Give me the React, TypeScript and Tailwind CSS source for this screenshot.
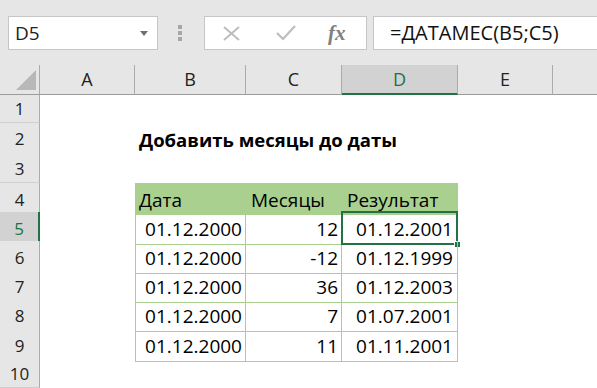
import React from "react";

const rows = [
  ["01.12.2000", "12", "01.12.2001"],
  ["01.12.2000", "-12", "01.12.1999"],
  ["01.12.2000", "36", "01.12.2003"],
  ["01.12.2000", "7", "01.07.2001"],
  ["01.12.2000", "11", "01.11.2001"],
];

const heights = [
  "h-[29px]",
  "h-[30px]",
  "h-[30px]",
  "h-[29px]",
  "h-[29px]",
  "h-[29px]",
  "h-[29px]",
  "h-[30px]",
  "h-[29px]",
  "h-[30px]",
];

const cols = ["A", "B", "C", "D", "E", ""];

function Toolbar() {
  return (
    <div className="h-[65px] bg-[#e6e6e6] flex items-start pt-[16px]">
      {/* name box */}
      <div className="ml-[8px] w-[150px] h-[34px] bg-white border border-[#c6c6c6] flex items-center justify-between pl-[6px] pr-[9px]">
        <span className="text-[19px] text-[#222] leading-none">D5</span>
        <svg width="8" height="5" viewBox="0 0 8 5">
          <path d="M0 0 L8 0 L4 5 Z" fill="#707070" />
        </svg>
      </div>
      {/* grip dots */}
      <div className="ml-[20px] mt-[9px] flex flex-col gap-[2px]">
        <div className="w-[4px] h-[4px] bg-[#a6a6a6]" />
        <div className="w-[4px] h-[4px] bg-[#a6a6a6]" />
        <div className="w-[4px] h-[4px] bg-[#a6a6a6]" />
      </div>
      {/* cancel / enter / fx */}
      <div className="ml-[22px] w-[163px] h-[34px] bg-white border border-[#c6c6c6] flex items-center">
        <svg className="ml-[18px]" width="17" height="15" viewBox="0 0 17 15">
          <path d="M1 1 L16 14 M16 1 L1 14" stroke="#bdbdbd" strokeWidth="2" fill="none" />
        </svg>
        <svg className="ml-[36px]" width="20" height="16" viewBox="0 0 20 16">
          <path d="M1 8 L7 14 L19 1" stroke="#bdbdbd" strokeWidth="2.2" fill="none" />
        </svg>
        <span className="ml-[32px] font-['Liberation_Serif',serif] italic font-bold text-[21px] text-[#808080] leading-none">
          fx
        </span>
      </div>
      {/* formula */}
      <div className="ml-[6px] flex-1 h-[34px] bg-white border border-r-0 border-[#c6c6c6] flex items-center pl-[16px]">
        <span className="text-[20px] text-[#111] leading-none">=ДАТАМЕС(B5;C5)</span>
      </div>
    </div>
  );
}

function ColumnHeader() {
  return (
    <div className="grid grid-cols-[40px_95px_111px_96px_116px_95px_1fr] h-[29px] bg-[#e6e6e6]">
      <div className="relative border-r border-r-[#ababab] border-b border-b-[#9b9b9b]">
        <svg className="absolute left-[16px] top-[5px]" width="20" height="20" viewBox="0 0 20 20">
          <path d="M20 0 L20 20 L0 20 Z" fill="#b8b8b8" />
        </svg>
      </div>
      {cols.map((c) =>
        c === "D" ? (
          <div
            key={c}
            className="flex items-center justify-center bg-[#d2d2d2] border-r border-r-[#ababab] border-b-2 border-b-[#217346] text-[18px] text-[#217346] pt-[1px]"
          >
            {c}
          </div>
        ) : (
          <div
            key={c || "x"}
            className={
              "flex items-center justify-center border-b border-b-[#9b9b9b] text-[18px] text-[#222] " +
              (c ? "border-r border-r-[#ababab]" : "")
            }
          >
            {c}
          </div>
        )
      )}
    </div>
  );
}

function RowHead({ n }: { n: number }) {
  if (n === 5) {
    return (
      <div className="flex items-center justify-center bg-[#d2d2d2] border-r-2 border-r-[#217346] border-b border-b-[#cfcfcf] text-[17px] text-[#217346] pt-[2px]">
        {n}
      </div>
    );
  }
  return (
    <div className="flex items-center justify-center bg-[#e6e6e6] border-r border-r-[#ababab] border-b border-b-[#cfcfcf] text-[17px] text-[#222] pt-[2px]">
      {n}
    </div>
  );
}

function SheetRow({ n }: { n: number }) {
  const h = heights[n - 1];
  const base = "grid grid-cols-[40px_95px_111px_96px_116px_95px_1fr] " + h;

  if (n === 2) {
    return (
      <div className={base}>
        <RowHead n={n} />
        <div />
        <div className="flex items-center pl-[4px] pt-[3px] whitespace-nowrap overflow-visible">
          <span className="text-[18.5px] font-bold text-black">Добавить месяцы до даты</span>
        </div>
        <div />
        <div />
        <div />
        <div />
      </div>
    );
  }

  if (n === 4) {
    return (
      <div className={base}>
        <RowHead n={n} />
        <div />
        <div className="flex items-center pl-[4px] pt-[3px] bg-[#a9d08e] text-[19px] text-black">Дата</div>
        <div className="flex items-center pl-[5px] pt-[3px] bg-[#a9d08e] text-[19px] text-black">Месяцы</div>
        <div className="flex items-center pl-[5px] pt-[3px] bg-[#a9d08e] text-[19px] text-black">Результат</div>
        <div />
        <div />
      </div>
    );
  }

  if (n >= 5 && n <= 9) {
    const [b, c, d] = rows[n - 5];
    return (
      <div className={base}>
        <RowHead n={n} />
        <div />
        <div className="flex items-center justify-end pr-[3px] pt-[3px] border-l border-r border-b border-[#a9d08e] text-[19px] text-black">
          {b}
        </div>
        <div className="flex items-center justify-end pr-[3px] pt-[3px] border-r border-b border-[#a9d08e] text-[19px] text-black">
          {c}
        </div>
        <div className="relative flex items-center justify-end pr-[4px] pt-[3px] border-r border-b border-[#a9d08e] text-[19px] text-black">
          {d}
          {n === 5 && (
            <>
              <div className="absolute left-[-1px] top-[-1px] right-[-1px] bottom-[-1px] border-2 border-[#217346]" />
              <div className="absolute right-[-4px] bottom-[-4px] w-[7px] h-[7px] bg-[#217346] border border-white" />
            </>
          )}
        </div>
        <div />
        <div />
      </div>
    );
  }

  return (
    <div className={base}>
      <RowHead n={n} />
      <div />
      <div />
      <div />
      <div />
      <div />
      <div />
    </div>
  );
}

export default function App() {
  return (
    <div className="w-[597px] h-[388px] overflow-hidden bg-white font-['Open_Sans',sans-serif]">
      <Toolbar />
      <ColumnHeader />
      {[1, 2, 3, 4, 5, 6, 7, 8, 9, 10].map((n) => (
        <SheetRow key={n} n={n} />
      ))}
    </div>
  );
}
